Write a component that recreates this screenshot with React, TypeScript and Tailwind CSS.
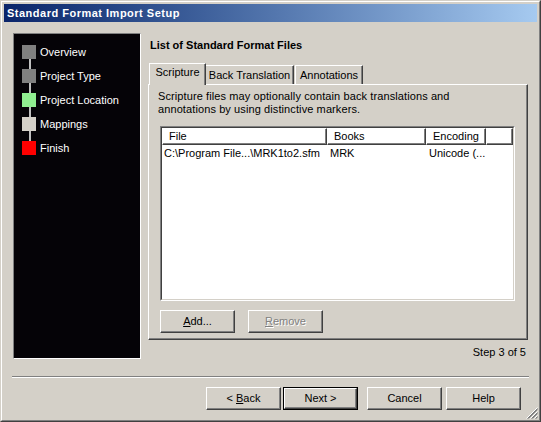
import React from "react";

// Classic Windows wizard: Standard Format Import Setup, step 3 of 5.

const steps = [
  { label: "Overview", color: "bg-[#808080]" },
  { label: "Project Type", color: "bg-[#808080]" },
  { label: "Project Location", color: "bg-[#90ee90]" },
  { label: "Mappings", color: "bg-[#d4d0c8]" },
  { label: "Finish", color: "bg-[#ff0000]" },
];

const raised =
  "border border-t-white border-l-white border-r-[#404040] border-b-[#404040] shadow-[inset_-1px_-1px_0_#808080]";

const Button = ({
  children,
  className = "",
  disabled = false,
  isDefault = false,
}: {
  children: React.ReactNode;
  className?: string;
  disabled?: boolean;
  isDefault?: boolean;
}) => {
  if (isDefault) {
    return (
      <div className={`w-[75px] h-[23px] border border-black ${className}`}>
        <div className={`h-full flex items-center justify-center ${raised}`}>
          {children}
        </div>
      </div>
    );
  }
  return (
    <div
      className={`w-[75px] h-[23px] flex items-center justify-center ${raised} ${
        disabled ? "text-[#808080] [text-shadow:1px_1px_0_#ffffff]" : ""
      } ${className}`}
    >
      {children}
    </div>
  );
};

const HeaderCell = ({ label, className }: { label: string; className: string }) => (
  <div
    className={`h-[17px] flex items-center pl-[6px] ${raised} ${className}`}
  >
    {label}
  </div>
);

const ResizeGrip = () => (
  <svg
    width="12"
    height="12"
    viewBox="0 0 12 12"
    className="absolute right-[1px] bottom-[1px]"
  >
    {[0, 4, 8].map((d) => (
      <g key={d}>
        <line x1={d + 0.5} y1={11.5} x2={11.5} y2={d + 0.5} stroke="#ffffff" strokeWidth="1" />
        <line x1={d + 1.5} y1={11.5} x2={11.5} y2={d + 1.5} stroke="#808080" strokeWidth="1" />
        <line x1={d + 2.5} y1={11.5} x2={11.5} y2={d + 2.5} stroke="#808080" strokeWidth="1" />
      </g>
    ))}
  </svg>
);

const App = () => {
  return (
    <div className="w-[541px] h-[422px] bg-[#d4d0c8] border border-t-[#d4d0c8] border-l-[#d4d0c8] border-r-[#404040] border-b-[#404040] font-['Liberation_Sans',Arial,sans-serif] text-[11px] leading-[13px] text-black">
      <div className="relative h-full border border-t-white border-l-white border-r-[#808080] border-b-[#808080] p-[2px] flex flex-col">
        {/* title bar */}
        <div className="h-[18px] flex items-center pl-[3px] bg-linear-to-r from-[#0a246a] to-[#a6caf0] text-white font-bold tracking-[0.5px]">
          Standard Format Import Setup
        </div>

        <div className="flex pl-[9px] pt-[11px] h-[337px]">
          {/* step list */}
          <div className="w-[128px] h-[326px] bg-[#050307] border border-t-[#808080] border-l-[#808080] border-r-white border-b-white pl-[8px] pt-[11px] text-white">
            {steps.map((step, i) => (
              <div key={step.label}>
                {i > 0 && <div className="ml-[7px] w-[2px] h-[10px] bg-[#c0c0c0]" />}
                <div className="flex items-center gap-[4px] h-[14px]">
                  <div className={`w-[14px] h-[14px] ${step.color}`} />
                  <span>{step.label}</span>
                </div>
              </div>
            ))}
          </div>

          {/* right column */}
          <div className="ml-[7px] w-[380px] flex flex-col">
            <div className="pt-[6px] pl-[2px] font-bold">List of Standard Format Files</div>

            <div className="mt-[11px] h-[21px] flex items-end relative z-10">
              <div className="ml-[1px] w-[57px] h-[22px] -mb-[1px] pb-[4px] flex items-center justify-center bg-[#d4d0c8] border-t border-l border-r border-t-white border-l-white border-r-[#404040] shadow-[inset_-1px_0_0_#808080]">
                Scripture
              </div>
              <div className="w-[88px] h-[19px] flex items-center justify-center border-t border-r border-t-white border-r-[#404040] shadow-[inset_-1px_0_0_#808080]">
                Back Translation
              </div>
              <div className="ml-[1px] w-[68px] h-[19px] flex items-center justify-center border-t border-l border-r border-t-white border-l-white border-r-[#404040] shadow-[inset_-1px_0_0_#808080]">
                Annotations
              </div>
            </div>

            <div className={`h-[260px] ${raised} pl-[9px] pt-[5px]`}>
              <p className="tracking-[0.1px]">
                Scripture files may optionally contain back translations and
                <br />
                annotations by using distinctive markers.
              </p>

              <div className="mt-[10px] ml-[2px] w-[355px] h-[175px] bg-white border border-t-[#808080] border-l-[#808080] border-r-white border-b-white">
                <div className="h-full border border-t-[#404040] border-l-[#404040] border-r-[#d4d0c8] border-b-[#d4d0c8]">
                  <div className="flex">
                    <HeaderCell label="File" className="w-[165px]" />
                    <HeaderCell label="Books" className="w-[99px]" />
                    <HeaderCell label="Encoding" className="w-[60px]" />
                    <HeaderCell label="" className="flex-1" />
                  </div>
                  <div className="flex pt-[2px] h-[13px]">
                    <span className="w-[165px] pl-[2px]">C:\Program File...\MRK1to2.sfm</span>
                    <span className="w-[99px] pl-[3px]">MRK</span>
                    <span className="pl-[3px]">Unicode (...</span>
                  </div>
                </div>
              </div>

              <div className="mt-[9px] ml-[2px] flex gap-[13px]">
                <Button>
                  <span>
                    <span className="underline">A</span>dd...
                  </span>
                </Button>
                <Button disabled>
                  <span>
                    <span className="underline">R</span>emove
                  </span>
                </Button>
              </div>
            </div>

            <div className="mt-[6px] pr-[2px] text-right">Step 3 of 5</div>
          </div>
        </div>

        {/* separator */}
        <div className="mt-[17px] ml-[8px] w-[517px] h-[2px] border-t border-b border-t-[#808080] border-b-white" />

        {/* wizard buttons */}
        <div className="mt-[9px] pl-[202px] flex">
          <Button>
            <span>
              &lt; <span className="underline">B</span>ack
            </span>
          </Button>
          <Button isDefault className="ml-[2px]">
            Next &gt;
          </Button>
          <Button className="ml-[9px]">Cancel</Button>
          <Button className="ml-[4px]">Help</Button>
        </div>

        <ResizeGrip />
      </div>
    </div>
  );
};

export default App;
